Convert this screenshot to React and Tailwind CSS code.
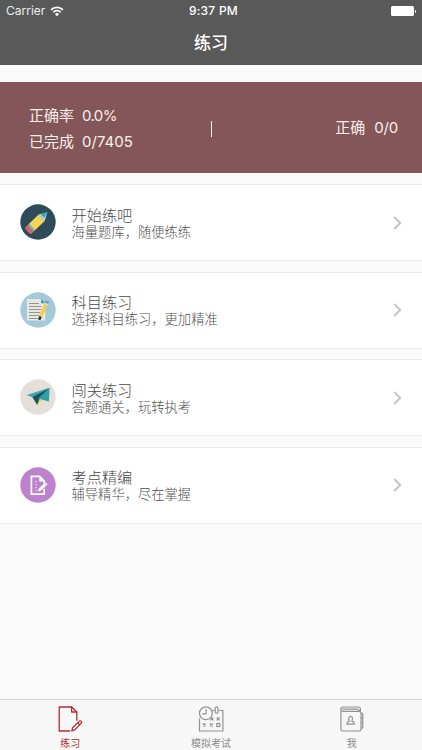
const FONT = "font-['Inter','Noto_Sans_CJK_SC',sans-serif]";

function PencilIcon() {
  return (
    <svg width="36" height="36" viewBox="0 0 36 36" className="relative -top-[0.6px] shrink-0">
      <circle cx="18" cy="18" r="17.7" fill="#2f4a58" />
      <g transform="translate(16.6 18.6) rotate(-44)">
        <path d="M-12.6-3.2a1.2 1.2 0 0 1 1.2-1.2h2.8V4.4h-2.8a1.2 1.2 0 0 1-1.2-1.2z" fill="#d4636c" />
        <path d="M-8.6-4.4h2.1V4.4h-2.1z" fill="#7fb4b0" />
        <path d="M-6.5-4.4H7V4.4H-6.5z" fill="#f3d55b" />
        <path d="M-6.5-1.4H7M-6.5 1.4H7" stroke="#e6c650" strokeWidth="0.5" />
        <path d="M7-4.4L14.8 0 7 4.4z" fill="#a9dce4" />
        <path d="M8.6-3.5L14.8 0 8.8 1.8z" fill="#35a3b3" />
      </g>
    </svg>
  );
}

function NotesIcon() {
  return (
    <svg width="36" height="36" viewBox="0 0 36 36" className="relative -top-[0.6px] shrink-0">
      <circle cx="18" cy="18" r="17.7" fill="#a2cad8" />
      <path d="M6.9 7h14.2l4.2 4.2v17.4H6.9z" fill="#eae7e2" />
      <path d="M21.1 7l4.2 4.2h-4.2z" fill="#319a9b" />
      <path d="M9 11.5h10M9 14.5h12.5M9 17.5h12M9 20.5h11.3M9 23.5h10M9 26.5h8.6" stroke="#8c8c8c" strokeWidth="0.9" />
      <g transform="translate(19.4 27) rotate(-66)">
        <path d="M-.5 0L3-1.8V1.8z" fill="#34454d" />
        <path d="M3-1.8h12.8V1.8H3z" fill="#f3cf4c" />
        <path d="M15.8-1.8h1.5V1.8h-1.5z" fill="#d6e4e8" />
        <path d="M17.3-1.8h2.4V1.8h-2.4z" fill="#7d9dac" />
      </g>
      <circle cx="19.6" cy="26.5" r="1.5" fill="#293941" />
    </svg>
  );
}

function PlaneIcon() {
  return (
    <svg width="36" height="36" viewBox="0 0 36 36" className="relative -top-[0.6px] shrink-0">
      <circle cx="18" cy="18" r="17.7" fill="#e4dfd9" />
      <path d="M16.2 19.4L22 20.8l-4.5 5.2z" fill="#e8cf55" />
      <path d="M29.6 8.7L12 17.5l5.2 8.5 1.8-5.2z" fill="#20505c" />
      <path d="M29.6 8.7L6.7 15.9l5.5 2.4z" fill="#3ba9ad" />
      <path d="M29.6 8.7L18 19.6l10.9 3z" fill="#2ba1a8" />
    </svg>
  );
}

function EditIcon() {
  return (
    <svg width="36" height="36" viewBox="0 0 36 36" className="shrink-0" fill="none">
      <circle cx="18" cy="18" r="17.7" fill="#bd82cc" />
      <path d="M24.2 21.8v5.3H11.4V9.4h8.2l4.6 4.8v3.2" stroke="#fff" strokeWidth="1.7" />
      <path d="M19.3 9v5.5h5z" fill="#fff" />
      <path d="M16 13.8v10.8" stroke="#fff" strokeWidth="0.9" strokeDasharray="1.5 1.5" />
      <path d="M17.8 24.6l1-3.2 6.6-6.1 2.2 2.2-6.6 6.1z" fill="#fff" />
      <path d="M24 16.3l2.3 2.3" stroke="#bd82cc" strokeWidth="0.7" />
    </svg>
  );
}

function PracticeTabIcon() {
  return (
    <svg width="26" height="26" viewBox="0 0 26 26" fill="none" stroke="#b22b32" strokeWidth="1.3" strokeLinejoin="round" strokeLinecap="round">
      <path d="M12.6 25H2.2V1h12.4l5.2 5v8.2" />
      <path d="M14.6 1v5h5.2" />
      <path d="M14.8 25l.8-3.2 6.5-6.4a1.4 1.4 0 0 1 2 2l-6.4 6.5zM20.7 16.8l2 2" />
    </svg>
  );
}

function ExamTabIcon() {
  return (
    <svg width="26" height="26" viewBox="0 0 26 26" fill="none" stroke="#929292" strokeWidth="1.2">
      <path d="M1.5 12.5V25h23.4V4.5h-4.2M16.6 4.5h-2.5" />
      <circle cx="7.9" cy="7.3" r="6.4" />
      <path d="M8 3v4.8H4.2" />
      <rect x="17.2" y="1.2" width="2.8" height="6" rx="1.2" />
      <path d="M12.4 11.4l3 3m0-3l-3 3M18.7 11.4l3 3m0-3l-3 3M4.7 17.5l3 3m0-3l-3 3M11.8 17.5l3 3m0-3l-3 3" />
      <rect x="18.8" y="17.5" width="3" height="3" />
    </svg>
  );
}

function MeTabIcon() {
  return (
    <svg width="26" height="26" viewBox="0 0 26 26" fill="none" stroke="#929292" strokeWidth="1.2" strokeLinejoin="round">
      <path d="M21.4 5.3V3a2 2 0 0 0-2-2H4a2.1 2.1 0 0 0-2.1 2.1V23A2 2 0 0 0 4 25h16a2 2 0 0 0 2-2V7.3a2 2 0 0 0-2-2H4A2.1 2.1 0 0 1 4 1" />
      <path d="M3.2 3.2h15.4l2.6 2.5" />
      <path d="M22 7.2h.9a.9.9 0 0 1 .9.9v3.8H22M22 11.9h1.8v5H22M22 16.9h1.8v4.3a.9.9 0 0 1-.9.9H22" />
      <path d="M10.2 14.4c-1.2-2 0-4.1 1.4-4.1s2.6 2.1 1.4 4.1v1c1.3.2 2.2.7 2.2 1.8v1H8v-1c0-1.1.9-1.6 2.2-1.8z" />
    </svg>
  );
}

const rows = [
  { title: "开始练吧", desc: "海量题库，随便练练", Icon: PencilIcon },
  { title: "科目练习", desc: "选择科目练习，更加精准", Icon: NotesIcon },
  { title: "闯关练习", desc: "答题通关，玩转执考", Icon: PlaneIcon },
  { title: "考点精编", desc: "辅导精华，尽在掌握", Icon: EditIcon },
];

const tabs = [
  { label: "练习", Icon: PracticeTabIcon, active: true },
  { label: "模拟考试", Icon: ExamTabIcon },
  { label: "我", Icon: MeTabIcon },
];

function Header() {
  return (
    <header className="h-[65px] shrink-0 bg-[#595959] text-white">
      <div className="grid h-[22px] grid-cols-3 items-center pl-[6px] pr-[6px] text-[12px] leading-none">
        <div className="flex items-center gap-[5px] text-[#eee]">
          <span>Carrier</span>
          <svg width="14" height="11" viewBox="0 0 14 11" fill="none" stroke="#fff" strokeWidth="1.6">
            <path d="M1 3.9a8.5 8.5 0 0 1 12 0M3.2 6.2a5.4 5.4 0 0 1 7.6 0" />
            <path d="M4.9 8a3 3 0 0 1 4.2 0L7 10.2z" fill="#fff" stroke="none" />
          </svg>
        </div>
        <div className="pl-[5px] text-center font-medium tracking-[0.25px]">9:37 PM</div>
        <div className="flex items-center justify-end gap-px">
          <span className="h-[10px] w-[23px] rounded-[1.5px] bg-white" />
          <span className="h-[3px] w-[1.5px] rounded-r-full bg-white" />
        </div>
      </div>
      <h1 className="text-center text-[17px] font-medium leading-[43px]">练习</h1>
    </header>
  );
}

function Summary() {
  return (
    <section className="mt-[17px] flex h-[91px] shrink-0 items-center bg-[#835759] pl-[29px] pr-[24px] pt-[2px] text-[15px] text-[#fbeeee]">
      <div className="w-[182px] leading-[26px]">
        <p className="flex gap-[8px]"><span>正确率</span><span className="tracking-[-0.6px]">0.0%</span></p>
        <p className="flex gap-[8px]"><span>已完成</span><span>0/7405</span></p>
      </div>
      <span className="h-[16px] w-px bg-[#fbeeee]" />
      <p className="flex flex-1 justify-end gap-[9px]"><span>正确</span><span className="tracking-[-0.2px]">0/0</span></p>
    </section>
  );
}

function Row({ title, desc, Icon }) {
  return (
    <li className="flex h-[77px] items-center border-y border-[#e9e9e9] bg-white px-5">
      <Icon />
      <div className="ml-[15.5px] flex-1 pt-[2px] font-light">
        <p className="text-[15.2px] leading-[17px] text-[#484848]">{title}</p>
        <p className="text-[13.3px] leading-[17px] text-[#505050]">{desc}</p>
      </div>
      <svg width="9" height="14" viewBox="0 0 9 14" fill="none" stroke="#c4c4c8" strokeWidth="2">
        <path d="M1.2 1l6 6-6 6" />
      </svg>
    </li>
  );
}

export default function App() {
  return (
    <div className={`flex h-[750px] w-[422px] flex-col overflow-hidden bg-[#fafafa] ${FONT}`}>
      <Header />
      <Summary />
      <ul className="mt-[11px] flex flex-1 flex-col gap-[10.6px]">
        {rows.map((row) => (
          <Row key={row.title} {...row} />
        ))}
      </ul>
      <nav className="grid h-[51px] shrink-0 grid-cols-3 border-t border-[#d4d4d4] bg-[#f7f7f7]">
        {tabs.map(({ label, Icon, active }) => (
          <button key={label} className="flex flex-col items-center pt-[6px]">
            <Icon />
            <span className={`mt-[4px] text-[10px] leading-[15px] ${active ? "text-[#b22b32]" : "text-[#8c8c8c]"}`}>
              {label}
            </span>
          </button>
        ))}
      </nav>
    </div>
  );
}
